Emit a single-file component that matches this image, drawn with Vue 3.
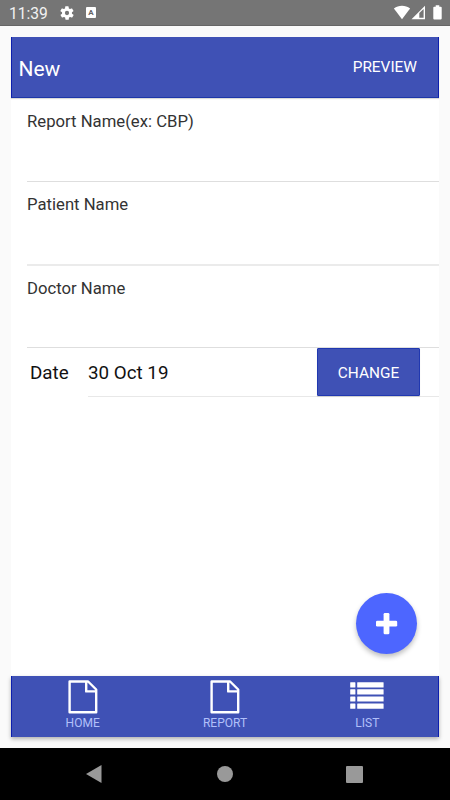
<script setup>
import { ref } from 'vue'

const fields = ['Report Name(ex: CBP)', 'Patient Name', 'Doctor Name']
const date = ref('30 Oct 19')

const tabs = [
  { label: 'HOME', icon: 'file' },
  { label: 'REPORT', icon: 'file' },
  { label: 'LIST', icon: 'list' }
]
</script>

<template>
  <div class="screen">
    <div class="status-bar">
      <span class="clock">11:39</span>
      <svg class="gear" width="16" height="16" viewBox="0 0 24 24" fill="#fff">
        <path d="M19.4 13a7.6 7.6 0 0 0 0-2l2.1-1.6a.5.5 0 0 0 .1-.7l-2-3.4a.5.5 0 0 0-.6-.2l-2.5 1a7.3 7.3 0 0 0-1.7-1l-.4-2.6a.5.5 0 0 0-.5-.5h-4a.5.5 0 0 0-.5.4l-.4 2.7a7.7 7.7 0 0 0-1.7 1l-2.5-1a.5.5 0 0 0-.6.2l-2 3.4a.5.5 0 0 0 .1.7L4.6 11a8 8 0 0 0 0 2l-2.1 1.6a.5.5 0 0 0-.1.7l2 3.4c.1.2.4.3.6.2l2.5-1a7.3 7.3 0 0 0 1.7 1l.4 2.6c0 .3.2.5.5.5h4c.3 0 .5-.2.5-.4l.4-2.7a7.7 7.7 0 0 0 1.7-1l2.5 1c.2.1.5 0 .6-.2l2-3.4a.5.5 0 0 0-.1-.7zM12 15.2a3.2 3.2 0 1 1 0-6.4 3.2 3.2 0 0 1 0 6.4z" />
      </svg>
      <span class="keyboard">A</span>
      <div class="signals">
        <svg width="18" height="15" viewBox="0 0 18 15" fill="#fff">
          <path d="M9 14.2 L.9 3.6 C5.5-.1 12.5-.1 17.1 3.6 Z" />
        </svg>
        <svg width="15" height="15" viewBox="0 0 15 15">
          <path d="M.5 14.2 L14 .7 V14.2 Z" fill="#fff" />
          <path d="M8.3 12.8 V8 L12.6 3.9 V12.8 Z" fill="#757575" />
        </svg>
        <svg class="battery" width="9" height="15" viewBox="0 0 9 15" fill="#fff">
          <path d="M2.7 .3h3.6v1.5h1.5c.5 0 .9.3.9.8v10.9c0 .5-.4.9-.9.9H1.2c-.5 0-.9-.4-.9-.9V2.6c0-.5.4-.8.9-.8h1.5z" />
        </svg>
      </div>
    </div>

    <div class="page">
      <header class="toolbar">
        <span class="title">New</span>
        <button class="preview">PREVIEW</button>
      </header>

      <main class="content">
        <div v-for="field in fields" :key="field" class="field">
          <label>{{ field }}</label>
        </div>

        <div class="date-row">
          <span class="date-label">Date</span>
          <div class="date-value">
            <span>{{ date }}</span>
            <button class="change">CHANGE</button>
          </div>
        </div>

        <button class="fab">
          <svg width="22" height="22" viewBox="0 0 22 22" fill="#fff">
            <rect x="7.6" y="0" width="5.8" height="21.2" rx="1.3" />
            <rect x="0" y="7.7" width="21.2" height="5.8" rx="1.3" />
          </svg>
        </button>
      </main>

      <footer class="tabs">
        <div v-for="tab in tabs" :key="tab.label" class="tab">
          <svg v-if="tab.icon === 'file'" width="30" height="34" viewBox="0 0 30 34" fill="none" stroke="#fff" stroke-width="2.4" stroke-linejoin="round">
            <path d="M1.6 1.5H20.1L28.2 9.5V32.2H1.6Z" />
            <path d="M18.2 1.5V11.4H28.2" />
          </svg>
          <svg v-else width="36" height="34" viewBox="0 0 36 34" fill="#fff">
            <template v-for="n in 4" :key="n">
              <rect x="1.2" :y="n * 7.1 - 4.9" width="5.2" height="5.2" rx=".5" />
              <rect x="8.2" :y="n * 7.1 - 4.9" width="26.4" height="5.2" rx=".5" />
            </template>
          </svg>
          <span>{{ tab.label }}</span>
        </div>
      </footer>
    </div>

    <nav class="system-nav">
      <div><svg width="16" height="18" viewBox="0 0 16 18"><path d="M15.5 0V18L0 9Z" /></svg></div>
      <div><svg width="16" height="16" viewBox="0 0 16 16"><circle cx="8" cy="8" r="8" /></svg></div>
      <div><svg width="17" height="17" viewBox="0 0 17 17"><rect width="17" height="17" rx="1" /></svg></div>
    </nav>
  </div>
</template>

<style>
body {
  margin: 0;
}
</style>

<style scoped>
.screen {
  box-sizing: border-box;
  width: 450px;
  height: 800px;
  display: flex;
  flex-direction: column;
  overflow: hidden;
  background: #fafafa;
  font-family: Roboto, sans-serif;
  color: #111;
}

button {
  border: 0;
  padding: 0;
  font-family: inherit;
}

svg {
  display: block;
  flex: none;
}

.status-bar {
  box-sizing: border-box;
  display: flex;
  align-items: center;
  height: 26px;
  padding: 0 8px 0 9px;
  background: #757575;
  border-bottom: 1px solid #666;
  color: #f2f2f2;
}

.clock {
  width: 50px;
  font-size: 15.6px;
  line-height: 24px;
  padding-top: 3px;
}

.keyboard {
  width: 10px;
  height: 11px;
  margin-left: 11px;
  border-radius: 1px;
  background: #fff;
  color: #666;
  font-size: 8px;
  font-weight: 700;
  line-height: 11px;
  text-align: center;
}

.signals {
  display: flex;
  margin-left: auto;
}

.battery {
  margin-left: 7px;
}

.page {
  display: flex;
  flex-direction: column;
  height: 700px;
  margin: 11px;
  background: #fff;
}

.toolbar {
  box-sizing: border-box;
  display: flex;
  align-items: center;
  justify-content: space-between;
  height: 61px;
  padding: 0 21px 0 6.5px;
  background: #3f51b5;
  border: 1px solid #0d1fae;
  border-bottom-color: #1d36a8;
  border-top: 0;
  box-shadow: 0 1px 1px rgba(0, 0, 0, 0.15);
  color: #fff;
}

.title {
  font-size: 21px;
  padding-top: 4px;
}

.preview {
  background: none;
  color: #fff;
  font-size: 15.4px;
  line-height: 20px;
}

.content {
  position: relative;
  flex: 1;
  padding-left: 16px;
}

.field {
  box-sizing: border-box;
  height: 84px;
  padding-top: 13px;
  border-bottom: 1px solid #dedede;
}

.field:first-child {
  padding-top: 14px;
}

.field:nth-child(2) {
  border-bottom: 2px solid #ebebeb;
}

.field:nth-child(3) {
  height: 82px;
}

.field label {
  display: block;
  color: #333;
  font-size: 16.7px;
  line-height: 20px;
}

.date-row {
  display: flex;
  height: 49px;
  font-size: 18.8px;
  line-height: 50px;
}

.date-label {
  width: 58px;
  padding-left: 3px;
}

.date-value {
  box-sizing: border-box;
  flex: 1;
  display: flex;
  justify-content: space-between;
  height: 49px;
  padding-right: 19px;
  border-bottom: 1px solid #e8e8e8;
}

.change {
  box-sizing: border-box;
  width: 103px;
  height: 48px;
  padding-top: 2px;
  border: 1px solid #2038b0;
  border-radius: 1px;
  background: #3f51b5;
  box-shadow: 0 1px 1px rgba(0, 0, 0, 0.12);
  color: #fff;
  font-size: 15.4px;
}

.fab {
  position: absolute;
  right: 22px;
  bottom: 22px;
  display: flex;
  align-items: center;
  justify-content: center;
  width: 61px;
  height: 61px;
  border-radius: 50%;
  background: #4d66ff;
  box-shadow: 0 3px 5px rgba(0, 0, 0, 0.25);
}

.tabs {
  box-sizing: border-box;
  display: flex;
  height: 61px;
  border: 1px solid #0d1fae;
  border-width: 0 1px;
  background: #3f51b5;
  box-shadow: 0 2px 4px rgba(0, 0, 0, 0.3);
}

.tab {
  flex: 1 1 0;
  box-sizing: border-box;
  display: flex;
  flex-direction: column;
  align-items: center;
  padding-top: 4px;
  color: #b2c0fa;
  font-size: 12px;
  line-height: 18px;
}

.tab:first-child {
  padding-right: 1px;
}

.tab:last-child {
  padding-left: 1px;
}

.system-nav {
  display: flex;
  align-items: center;
  justify-content: center;
  height: 52px;
  background: #000;
  fill: #999;
}

.system-nav div {
  display: flex;
  justify-content: center;
  width: 130px;
}

.system-nav div:first-child svg {
  margin-right: 2px;
}

.system-nav div:last-child svg {
  margin-right: 1px;
}
</style>
